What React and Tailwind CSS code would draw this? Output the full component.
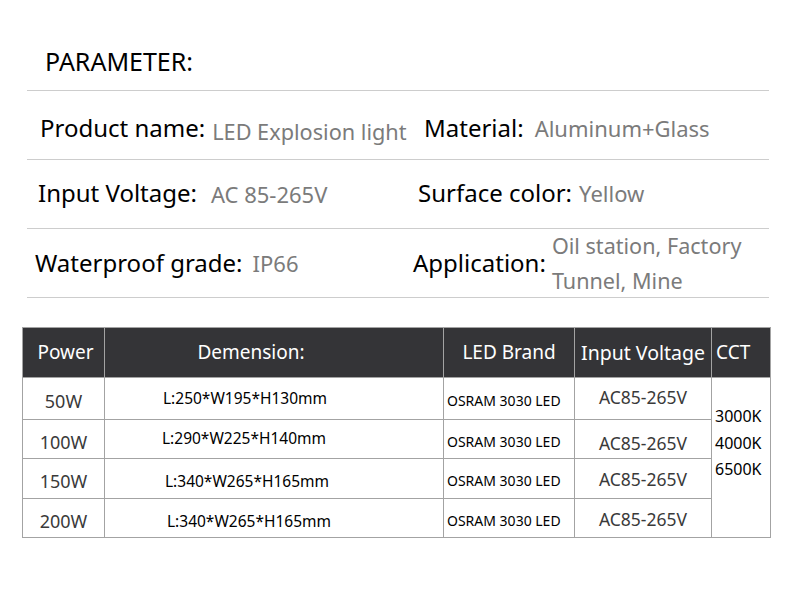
const PARAMS = [
  {
    row: "pt-[6px]",
    left: { label: "Product name:", value: "LED Explosion light", pad: "pl-[13px]", gap: "ml-[7px] relative top-[3px] text-[21.7px]" },
    right: { label: "Material:", value: "Aluminum+Glass", pad: "pl-[397px]", gap: "ml-[11px] text-[22px]" },
  },
  {
    row: "pb-[2px]",
    left: { label: "Input Voltage:", value: "AC 85-265V", pad: "pl-[11px]", gap: "ml-[14px] relative top-[1px] text-[22px]" },
    right: { label: "Surface color:", value: "Yellow", pad: "pl-[391px]", gap: "ml-[7px] text-[22px]" },
  },
];

const ROWS = [
  { power: "50W", dim: "L:250*W195*H130mm", dimPad: "pl-[58px] pt-[1px]", ac: "pb-[2px]", h: "h-[42px]" },
  { power: "100W", dim: "L:290*W225*H140mm", dimPad: "pl-[57px] pb-[1px]", ac: "pt-[8px]", h: "h-[39px]" },
  { power: "150W", dim: "L:340*W265*H165mm", dimPad: "pl-[60px] pt-[6px]", ac: "pt-[2px]", h: "h-[40px]" },
  { power: "200W", dim: "L:340*W265*H165mm", dimPad: "pl-[62px] pt-[7px]", ac: "pt-[3px]", h: "h-[39px]" },
];

function ParamCell({ item }) {
  return (
    <div className={`flex items-baseline ${item.pad}`}>
      <span className="text-[24px] text-black">{item.label}</span>
      <span className={`${item.gap} text-[#7b7b7b]`}>{item.value}</span>
    </div>
  );
}

export default function App() {
  return (
    <div className="h-[591px] w-[790px] bg-white" style={{ fontFamily: '"Noto Sans", "Open Sans", sans-serif' }}>
      <div className="flex h-[90px] items-end pb-[16px] pl-[45px]">
        <span className="text-[25px] leading-none text-black">PARAMETER:</span>
      </div>

      <div className="ml-[27px] w-[742px] border-t border-[#cdcdcd]">
        {PARAMS.map((row, i) => (
          <div key={i} className={`flex h-[69px] items-center border-b border-[#cdcdcd] ${row.row}`}>
            <div className="w-0 whitespace-nowrap">
              <ParamCell item={row.left} />
            </div>
            <div className="w-0 whitespace-nowrap">
              <ParamCell item={row.right} />
            </div>
          </div>
        ))}
        <div className="flex h-[69px] items-center border-b border-[#cdcdcd] whitespace-nowrap">
          <div className="flex w-[386px] items-baseline pl-[8px]">
            <span className="text-[24px] text-black">Waterproof grade:</span>
            <span className="ml-[10px] text-[22px] text-[#7b7b7b]">IP66</span>
          </div>
          <div className="flex items-center">
            <span className="text-[24px] text-black">Application:</span>
            <div className="ml-[6px] flex flex-col text-[21.6px] leading-[35px] text-[#7b7b7b]">
              <span>Oil station, Factory</span>
              <span>Tunnel, Mine</span>
            </div>
          </div>
        </div>
      </div>

      <table className="ml-[22px] mt-[29px] w-[748px] table-fixed border-collapse">
        <colgroup>
          <col className="w-[82px]" />
          <col className="w-[339px]" />
          <col className="w-[131px]" />
          <col className="w-[137px]" />
          <col className="w-[59px]" />
        </colgroup>
        <thead>
          <tr className="h-[50px] bg-[#343437] text-[19px] text-white">
            <th className="border border-[#a3a3a3] pl-[4px] font-normal">Power</th>
            <th className="border border-[#a3a3a3] pr-[46px] font-normal">Demension:</th>
            <th className="border border-[#a3a3a3] font-normal">LED Brand</th>
            <th className="whitespace-nowrap border border-[#a3a3a3] text-[19.5px] font-normal">Input Voltage</th>
            <th className="border border-[#a3a3a3] pl-[4px] text-left font-normal">CCT</th>
          </tr>
        </thead>
        <tbody>
          {ROWS.map((r, i) => (
            <tr key={r.power} className={r.h}>
              <td className="border border-[#a3a3a3] pt-[6px] text-center text-[18px] text-[#3a3a3a]">{r.power}</td>
              <td className={`border border-[#a3a3a3] ${r.dimPad} text-[15.5px] text-black`}>{r.dim}</td>
              <td className="whitespace-nowrap border border-[#a3a3a3] pl-[3px] pt-[4px] text-[14px] text-black">OSRAM 3030 LED</td>
              <td className={`border border-[#a3a3a3] ${r.ac} text-center text-[17.5px] text-[#3a3a3a]`}>AC85-265V</td>
              {i === 0 && (
                <td rowSpan={4} className="border border-[#a3a3a3] pl-[3px] pt-[12px] align-top text-[16px] leading-[26.5px] text-black">
                  <div className="mt-[13px]">3000K</div>
                  <div>4000K</div>
                  <div>6500K</div>
                </td>
              )}
            </tr>
          ))}
        </tbody>
      </table>
    </div>
  );
}
